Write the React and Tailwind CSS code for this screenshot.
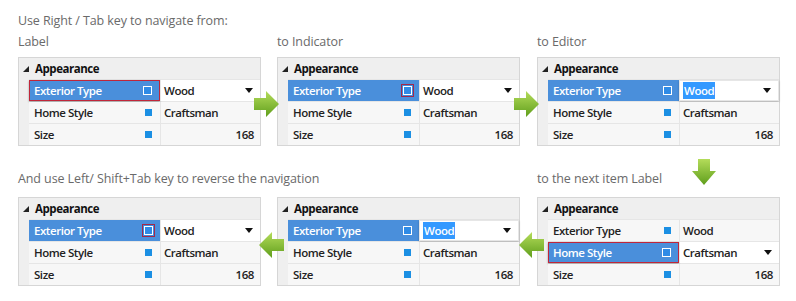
import React from 'react';

const rows = [
  { label: 'Exterior Type', value: 'Wood' },
  { label: 'Home Style', value: 'Craftsman' },
  { label: 'Size', value: '168', right: true },
];

const Indicator = ({ selected, focused }) => {
  if (!selected) return <span className="block w-[7px] h-[7px] bg-[#1b8fe3]" />;
  const box = <span className="block w-[9px] h-[9px] border-[1.5px] border-white bg-[#2f8be6]" />;
  if (!focused) return box;
  return (
    <span className="flex items-center justify-center w-[13px] h-[13px] border border-[#a3284a] bg-[#3b8ee0]">
      {box}
    </span>
  );
};

const Caret = () => (
  <svg width="8" height="5" viewBox="0 0 8 5" className="ml-auto mr-[7px]">
    <polygon points="0,0 8,0 4,5" fill="#111" />
  </svg>
);

const Panel = ({ selectedRow = 0, focus }) => (
  <div className="w-[243px] border border-[#d6d6d6] bg-[#efefef] text-[11.5px] tracking-[-0.45px] font-semibold text-[#222]">
    <div className="h-[21px] flex items-center">
      <svg width="6" height="6" viewBox="0 0 6 6" className="ml-[4px] mr-[6px]">
        <polygon points="6,0 6,6 0,6" fill="#222" />
      </svg>
      <span className="font-bold text-[#111]">Appearance</span>
    </div>
    <div className="pl-[10px]">
      {rows.map((r, i) => {
        const sel = i === selectedRow;
        const labelFocus = sel && focus === 'label';
        const editFocus = sel && focus === 'editor';
        return (
          <div key={r.label} className="h-[22px] flex border-t border-[#e6e6e6]">
            <div
              className={
                'w-[131px] flex items-center pr-[5px] ' +
                (sel ? 'bg-[#4a8fdb] text-white ' : 'bg-[#f7f7f7] ') +
                (labelFocus ? 'border border-[#c0263a] shadow-[0_1px_2px_rgba(0,0,0,0.35)] pl-[4px]' : 'pl-[5px]')
              }
            >
              <span>{r.label}</span>
              <span className="ml-auto w-[13px] flex items-center justify-center">
                <Indicator selected={sel} focused={sel && focus === 'indicator'} />
              </span>
            </div>
            <div
              className={
                'flex-1 flex items-center border-l border-[#e6e6e6] ' +
                (sel ? 'bg-white ' : 'bg-[#f7f7f7] ') +
                (editFocus ? 'border border-[#c0263a] pl-[3px] shadow-[0_1px_2px_rgba(0,0,0,0.25)]' : 'pl-[3px]')
              }
            >
              {editFocus ? (
                <span className="bg-[#3399ff] text-white px-[1px]">{r.value}</span>
              ) : (
                <span className={r.right ? 'ml-auto mr-[6px]' : ''}>{r.value}</span>
              )}
              {sel && !r.right && <Caret />}
            </div>
          </div>
        );
      })}
    </div>
  </div>
);

const Arrow = ({ dir, className }) => {
  const id = 'g-' + dir;
  const pts = {
    right: '0,7 12,7 12,0 25,13 12,26 12,19 0,19',
    left: '25,7 13,7 13,0 0,13 13,26 13,19 25,19',
    down: '6,0 18,0 18,12 24,12 12,26 0,12 6,12',
  }[dir];
  return (
    <svg width="25" height="26" viewBox="0 0 25 26" className={'absolute ' + className}>
      <defs>
        <linearGradient id={id} x1="0" y1="0" x2="0" y2="1">
          <stop offset="0" stopColor="#b4dc5a" />
          <stop offset="1" stopColor="#5f9e1c" />
        </linearGradient>
      </defs>
      <polygon points={pts} fill={`url(#${id})`} />
    </svg>
  );
};

export default function App() {
  return (
    <div className="relative w-[796px] h-[301px] bg-white overflow-hidden font-['Segoe_UI','Open_Sans',sans-serif] text-[#6a6a6a]">
      <div className="pl-[18px] pt-[12px] text-[12.5px] tracking-[-0.1px]">
        <p className="h-[18px] leading-[18px]">Use Right / Tab key to navigate from:</p>
        <div className="flex mt-[3px] h-[18px] leading-[18px] gap-[16px]">
          <p className="w-[243px]">Label</p>
          <p className="w-[243px]">to Indicator</p>
          <p className="w-[243px] ml-px">to Editor</p>
        </div>
        <div className="flex mt-[6px] gap-[16px]">
          <Panel focus="label" />
          <Panel focus="indicator" />
          <div className="ml-px">
            <Panel focus="editor" />
          </div>
        </div>
        <div className="flex mt-[24px] h-[18px] leading-[18px]">
          <p className="w-[519px]">And use Left/ Shift+Tab key to reverse the navigation</p>
          <p>to the next item Label</p>
        </div>
        <div className="flex mt-[9px] gap-[16px]">
          <Panel focus="indicator" />
          <Panel focus="editor" />
          <div className="ml-px">
            <Panel focus="label" selectedRow={1} />
          </div>
        </div>
      </div>
      <Arrow dir="right" className="left-[254px] top-[91px]" />
      <Arrow dir="right" className="left-[514px] top-[91px]" />
      <Arrow dir="down" className="left-[692px] top-[159px]" />
      <Arrow dir="left" className="left-[259px] top-[232px]" />
      <Arrow dir="left" className="left-[519px] top-[232px]" />
    </div>
  );
}
